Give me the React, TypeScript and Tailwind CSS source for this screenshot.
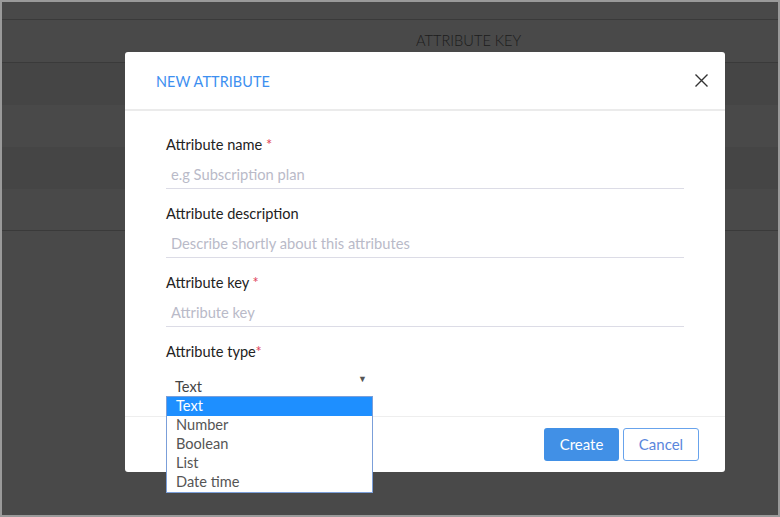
import React from 'react'

const fields = [
  { label: 'Attribute name', required: ' *', placeholder: 'e.g Subscription plan' },
  { label: 'Attribute description', required: '', placeholder: 'Describe shortly about this attributes' },
  { label: 'Attribute key', required: ' *', placeholder: 'Attribute key' },
]

const types = ['Text', 'Number', 'Boolean', 'List', 'Date time']

export default function App() {
  return (
    <div
      className="relative w-[780px] h-[517px] overflow-hidden bg-[#494949] shadow-[inset_0_0_0_2px_#9a9a9a]"
      style={{ fontFamily: 'Lato, "Noto Sans", sans-serif' }}
    >
      {/* table behind the overlay */}
      <div className="px-[2px] pt-[2px]">
        <div className="h-[18px] border-b border-[#3a3a3a]" />
        <div className="h-[43px] border-b border-[#3a3a3a] flex items-center pl-[414px] text-[14.6px] font-light text-[#1c1c1c]">
          ATTRIBUTE KEY
        </div>
        <div className="h-[42px] bg-[#454545]" />
        <div className="h-[42px] bg-[#494949]" />
        <div className="h-[42px] bg-[#454545]" />
        <div className="h-[42px] bg-[#494949] border-b border-[#3a3a3a]" />
      </div>

      {/* modal */}
      <div className="absolute left-[125px] top-[52px] w-[600px] h-[420px] bg-white rounded-[3px] flex flex-col">
        <div className="h-[59px] border-b-2 border-[#ebebeb] flex items-center justify-between pl-[31px] pr-[16px]">
          <span className="text-[14.4px] text-[#3d8ff0] tracking-[0.1px] pt-[3px]">NEW ATTRIBUTE</span>
          <svg width="15" height="15" viewBox="0 0 15 15">
            <path d="M1.5 1.5 L13.5 13.5 M13.5 1.5 L1.5 13.5" stroke="#333" strokeWidth="1.4" />
          </svg>
        </div>

        <div className="flex-1 pt-[24px] px-[41px]">
          {fields.map((f) => (
            <div key={f.label} className="mb-[15px]">
              <div className="h-[20px] leading-[20px] text-[14.6px] text-[#222]">
                {f.label}
                {f.required && <span className="text-[#e0455a]">{f.required}</span>}
              </div>
              <div className="mt-[5px] h-[29px] border-b border-[#dcdce6] flex items-center pl-[5px] text-[14.7px] text-[#b9bac8]">
                {f.placeholder}
              </div>
            </div>
          ))}
          <div>
            <div className="h-[20px] leading-[20px] text-[14.6px] text-[#222]">
              Attribute type<span className="text-[#e0455a]">*</span>
            </div>
            <div className="mt-[10px] h-[24px] w-[207px] flex items-center justify-between pl-[9px] pr-[6px] text-[14.6px] text-[#444]">
              <span className="pt-[5px]">Text</span>
              <span className="text-[9px] text-[#555] -mt-[10px]">▼</span>
            </div>
          </div>
        </div>

        <div className="h-[56px] border-t border-[#eeeeee] flex items-center justify-end gap-[4px] pr-[26px]">
          <button className="h-[33px] w-[75px] rounded-[3px] bg-[#4190e6] text-white text-[15px]">Create</button>
          <button className="h-[33px] w-[76px] rounded-[3px] border border-[#68a3ec] text-[#5a86dc] text-[15px]">Cancel</button>
        </div>
      </div>

      {/* open select list */}
      <div className="absolute left-[166px] top-[396px] w-[207px] border border-[#7b9fd9] bg-white text-[14.6px]">
        {types.map((t, i) => (
          <div
            key={t}
            className={
              i === 0
                ? 'h-[19px] leading-[17px] pl-[9px] bg-[#1e8fff] text-white'
                : 'h-[19px] leading-[17px] pl-[9px] text-[#555]'
            }
          >
            {t}
          </div>
        ))}
      </div>
    </div>
  )
}
